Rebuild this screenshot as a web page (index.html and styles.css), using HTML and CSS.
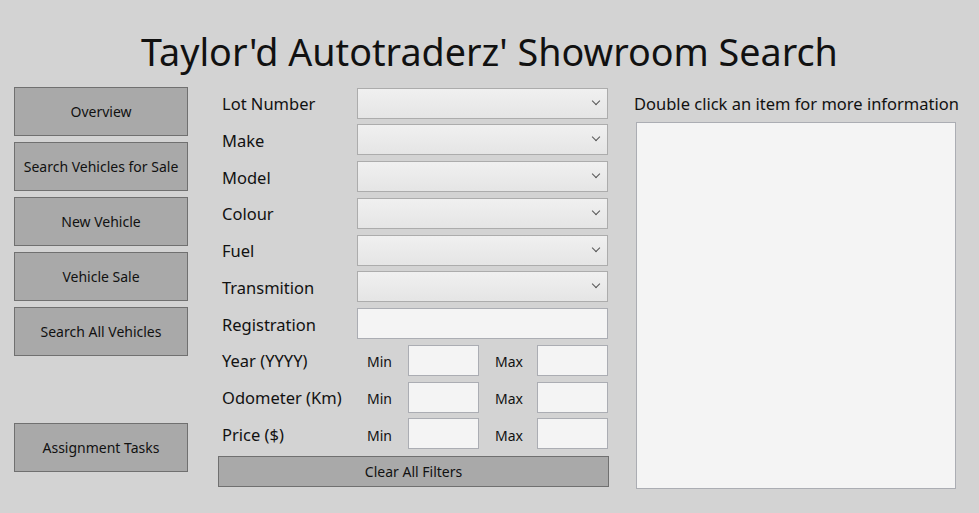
FILE: index.html
```html
<!DOCTYPE html>
<html>
<head>
<meta charset="utf-8">
<link rel="stylesheet" href="styles.css">
</head>
<body>
<h1 class="title">Taylor'd Autotraderz' Showroom Search</h1>
<div class="main">
  <nav class="nav">
    <button class="btn navbtn">Overview</button>
    <button class="btn navbtn">Search Vehicles for Sale</button>
    <button class="btn navbtn">New Vehicle</button>
    <button class="btn navbtn">Vehicle Sale</button>
    <button class="btn navbtn">Search All Vehicles</button>
    <button class="btn navbtn tasks">Assignment Tasks</button>
  </nav>
  <div class="form">
    <div class="row"><span class="lbl">Lot Number</span><div class="combo"><span class="chev"></span></div></div>
    <div class="row"><span class="lbl">Make</span><div class="combo"><span class="chev"></span></div></div>
    <div class="row"><span class="lbl">Model</span><div class="combo"><span class="chev"></span></div></div>
    <div class="row"><span class="lbl">Colour</span><div class="combo"><span class="chev"></span></div></div>
    <div class="row"><span class="lbl">Fuel</span><div class="combo"><span class="chev"></span></div></div>
    <div class="row"><span class="lbl">Transmition</span><div class="combo"><span class="chev"></span></div></div>
    <div class="row"><span class="lbl">Registration</span><div class="textbox"></div></div>
    <div class="row"><span class="lbl">Year (YYYY)</span>
      <div class="range"><span class="small min">Min</span><div class="textbox"></div><span class="small max">Max</span><div class="textbox"></div></div></div>
    <div class="row"><span class="lbl">Odometer (Km)</span>
      <div class="range"><span class="small min">Min</span><div class="textbox"></div><span class="small max">Max</span><div class="textbox"></div></div></div>
    <div class="row"><span class="lbl">Price ($)</span>
      <div class="range"><span class="small min">Min</span><div class="textbox"></div><span class="small max">Max</span><div class="textbox"></div></div></div>
    <button class="btn clear">Clear All Filters</button>
  </div>
  <div class="results">
    <div class="hint">Double click an item for more information</div>
    <div class="listbox"></div>
  </div>
</div>
</body>
</html>
```
FILE: styles.css
```css
html, body {
  margin: 0;
  padding: 0;
  background: #d3d3d3;
  width: 979px;
  height: 513px;
  overflow: hidden;
  font-family: "Noto Sans", "Open Sans", sans-serif;
  color: #111;
}
.title {
  margin: 0;
  padding-top: 27px;
  height: 60px;
  font-size: 37.7px;
  font-weight: 400;
  line-height: 50px;
  text-align: center;
}
.main {
  display: flex;
  align-items: flex-start;
  padding-left: 14px;
}
.nav {
  display: flex;
  flex-direction: column;
  gap: 6px;
  width: 174px;
  flex: none;
}
.form {
  margin-left: 30px;
  width: 391px;
  flex: none;
  display: flex;
  flex-direction: column;
  gap: 5.75px;
}
.results { margin-left: 27px; width: 321px; flex: none; }
.btn {
  box-sizing: border-box;
  background: #a9a9a9;
  border: 1px solid #707070;
  font-family: inherit;
  font-size: 14px;
  color: #111;
  padding: 0;
  margin: 0;
}
.navbtn { height: 49px; width: 174px; }
.tasks { margin-top: 61px; }
.row {
  display: grid;
  grid-template-columns: 139px 251px;
  height: 31px;
  align-items: center;
}
.lbl { padding-left: 4px; font-size: 16.5px; line-height: 31px; padding-top: 1px; white-space: nowrap; }
.combo {
  box-sizing: border-box;
  height: 31px;
  border: 1px solid #acacac;
  background: linear-gradient(#f0f0f0, #e5e5e5);
  position: relative;
}
.chev {
  position: absolute;
  right: 8px;
  top: 9px;
  width: 5px;
  height: 5px;
  border-right: 1.5px solid #555;
  border-bottom: 1.5px solid #555;
  transform: rotate(45deg);
}
.textbox {
  box-sizing: border-box;
  height: 31px;
  border: 1px solid #abadb3;
  background: #f4f4f4;
}
.range {
  display: grid;
  grid-template-columns: 51px 71px 58px 71px;
  align-items: center;
  height: 31px;
}
.small { font-size: 14px; padding-top: 3px; }
.min { padding-left: 10px; }
.max { padding-left: 16px; }
.clear { height: 31px; width: 391px; margin-top: 1px; }
.hint { font-size: 16.5px; line-height: 20px; height: 35px; padding-top: 7px; margin-left: -2px; box-sizing: border-box; white-space: nowrap; }
.listbox {
  box-sizing: border-box;
  width: 320px;
  height: 367px;
  border: 1px solid #abadb3;
  background: #f4f4f4;
}
```
